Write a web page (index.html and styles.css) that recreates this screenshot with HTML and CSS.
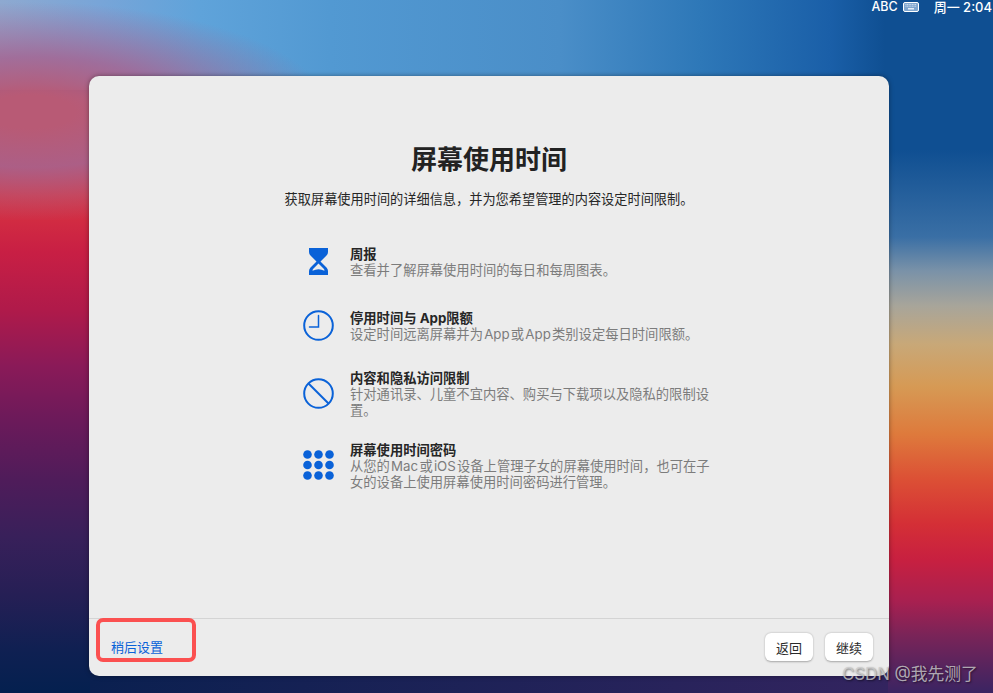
FILE: index.html
```html
<!DOCTYPE html>
<html lang="zh-CN">
<head>
  <meta charset="UTF-8">
  <meta name="viewport" content="width=device-width, initial-scale=1.0">
  <title>屏幕使用时间</title>
  <link rel="stylesheet" href="styles.css">
</head>
<body>
  <div class="menubar">
    <span class="menu-abc">ABC</span>
    <svg class="menu-keyboard" width="16" height="10" viewBox="0 0 16 10">
      <rect x="0.5" y="0.5" width="15" height="9" rx="1.5" fill="#7fa6cf" stroke="#fff"/>
      <rect x="5" y="6" width="6" height="1.5" fill="#e6eef7"/>
      <path d="M2.5 2.5h11M2.5 4.2h11" stroke="#cfdeee" stroke-width="1" stroke-dasharray="1 0.6"/>
    </svg>
    <span class="menu-clock">周一 2:04</span>
  </div>

  <div class="window">
    <div class="content">
      <h1>屏幕使用时间</h1>
      <p class="subtitle">获取屏幕使用时间的详细信息，并为您希望管理的内容设定时间限制。</p>

      <div class="features">
        <div class="feature">
          <div class="feature-icon">
            <svg width="19" height="27" viewBox="0 0 19 27">
              <path d="M0 0H19V4Q19 6 17.500 7.500L11.500 13.500L17.500 19.500Q19 21 19 23V27H0V23Q0 21 1.500 19.500L7.500 13.500L1.500 7.500Q0 6 0 4Z" fill="#0a62d8"/>
              <path d="M9.500 15.500L14.500 20.500Q15.500 21.500 15.500 22.800Q9.500 19.800 3.500 22.800Q3.500 21.500 4.500 20.500Z" fill="#ececec"/>
            </svg>
          </div>
          <div class="feature-text">
            <h3>周报</h3>
            <p>查看并了解屏幕使用时间的每日和每周图表。</p>
          </div>
        </div>

        <div class="feature">
          <div class="feature-icon">
            <svg width="31" height="31" viewBox="0 0 31 31" fill="none" stroke="#0a62d8" stroke-linecap="round">
              <circle cx="15.500" cy="15.500" r="14.300" stroke-width="2"/>
              <path d="M15.500 5.500V17H6.500" stroke-width="1.500"/>
            </svg>
          </div>
          <div class="feature-text">
            <h3>停用时间与 App限额</h3>
            <p>设定时间远离屏幕并为&#8202;App&#8202;或&#8202;App&#8202;类别设定每日时间限额。</p>
          </div>
        </div>

        <div class="feature">
          <div class="feature-icon">
            <svg width="31" height="31" viewBox="0 0 31 31" fill="none" stroke="#0a62d8">
              <circle cx="15.500" cy="15.500" r="14.300" stroke-width="2"/>
              <path d="M5.500 5.500l20 20" stroke-width="2"/>
            </svg>
          </div>
          <div class="feature-text">
            <h3>内容和隐私访问限制</h3>
            <p>针对通讯录、儿童不宜内容、购买与下载项以及隐私的限制设置。</p>
          </div>
        </div>

        <div class="feature">
          <div class="feature-icon">
            <svg width="31" height="30" viewBox="0 0 31 30" fill="#0a62d8">
              <circle cx="4.500" cy="4.500" r="4.300"/><circle cx="15.500" cy="4.500" r="4.300"/><circle cx="26.500" cy="4.500" r="4.300"/>
              <circle cx="4.500" cy="15" r="4.300"/><circle cx="15.500" cy="15" r="4.300"/><circle cx="26.500" cy="15" r="4.300"/>
              <circle cx="4.500" cy="25.500" r="4.300"/><circle cx="15.500" cy="25.500" r="4.300"/><circle cx="26.500" cy="25.500" r="4.300"/>
            </svg>
          </div>
          <div class="feature-text">
            <h3>屏幕使用时间密码</h3>
            <p>从您的&#8202;Mac&#8202;或&#8202;iOS&#8202;设备上管理子女的屏幕使用时间，也可在子女的设备上使用屏幕使用时间密码进行管理。</p>
          </div>
        </div>
      </div>
    </div>

    <div class="footer">
      <a class="later" href="#">稍后设置</a>
      <div class="buttons">
        <button>返回</button>
        <button>继续</button>
      </div>
    </div>
    <div class="highlight"></div>
  </div>

  <div class="watermark">CSDN @我先测了</div>
</body>
</html>
```

FILE: styles.css
```css
body {
  margin: 0;
  width: 993px;
  height: 693px;
  overflow: hidden;
  position: relative;
  font-family: Inter, "Noto Sans CJK SC", sans-serif;
  background-color: #1a2a70;
  background-image:
    radial-gradient(ellipse 300px 110px at 30px 112px, #b85a75 0, #b85a75 15%, rgba(165,100,145,0.85) 50%, rgba(130,130,185,0) 100%),
    linear-gradient(180deg, rgba(184,90,117,0) 85px, #b85a75 100px, #d0484c 138px, #d93540 195px, #c81f44 252px, #b01a4a 309px, #8a1a58 366px, #6a1a5a 423px, #4f1c5a 480px, #38205a 537px, #261f55 594px, #0f2052 651px, #04204f 693px),
    linear-gradient(180deg, #0f4f92 150px, #3a6fa5 237px, #7a92a8 271px, #a8a59a 306px, #c8a878 344px, #d69a55 386px, #de7a3c 434px, #dc5035 479px, #d42f36 524px, #c82040 559px, #a82050 601px, #7a2458 635px, #3a2462 693px),
    linear-gradient(90deg, #8ea9d0 0, #78a5d8 100px, #5fa3da 200px, #5299d2 330px, #4a8ec8 560px, #2e78b8 700px, #1a5fa8 830px, #0f4f92 885px),
    linear-gradient(90deg, #0a2050 89px, #33245f 889px);
  background-size: 100% 220px, 90px 100%, 105px 100%, 100% 90px, 100% 20px;
  background-position: 0 0, left top, right top, 0 0, 0 100%;
  background-repeat: no-repeat;
}

.menubar {
  height: 12px;
  padding: 1px 1px 0 0;
  display: flex;
  justify-content: flex-end;
  align-items: center;
  color: #fff;
  font-size: 13px;
  font-weight: 500;
  line-height: 12px;
}
.menu-abc {
  font-size: 12.5px;
}
.menu-keyboard {
  margin-left: 5px;
}
.menu-clock {
  margin-left: 15px;
}

.window {
  position: relative;
  margin: 63px 0 0 89px;
  width: 800px;
  height: 600px;
  background: #ececec;
  border-radius: 10px;
  box-shadow: 0 0 5px rgba(0,0,0,0.4);
  display: flex;
  flex-direction: column;
}
.content {
  flex: 1;
  padding-top: 67px;
}
h1 {
  margin: 0;
  text-align: center;
  font-size: 26px;
  line-height: 34px;
  font-weight: 700;
  color: #222;
}
.subtitle {
  margin: 13px 0 0;
  text-align: center;
  font-size: 13.2px;
  line-height: 18px;
  color: #262626;
}
.features {
  margin: 38px 0 0 211px;
  width: 412px;
  display: grid;
  grid-template-rows: 64px 60px 72px auto;
}
.feature {
  display: flex;
  align-items: center;
  align-self: start;
}
.feature-icon {
  width: 50px;
  flex: none;
  display: flex;
  justify-content: center;
  margin-top: -2px;
  padding-right: 14px;
  box-sizing: border-box;
}
.feature-text {
  width: 362px;
}
.feature h3 {
  margin: 0;
  font-size: 13.3px;
  line-height: 16px;
  font-weight: 700;
  color: #262626;
}
.feature p {
  margin: 0;
  font-size: 13.3px;
  line-height: 16px;
  color: #7c7c7c;
}

.footer {
  height: 58px;
  box-sizing: border-box;
  border-top: 1px solid #d4d4d4;
  display: flex;
  justify-content: space-between;
  align-items: flex-start;
  padding: 14px 16px 0 22px;
}
.later {
  margin-top: 5px;
  font-size: 13px;
  line-height: 18px;
  color: #0a62d8;
  text-decoration: none;
}
.buttons {
  display: flex;
  gap: 12px;
}
button {
  width: 48px;
  height: 28px;
  padding: 0;
  border: none;
  border-radius: 6px;
  background: #fff;
  color: #2a2a2a;
  font-family: inherit;
  font-size: 13px;
  box-shadow: 0 0.5px 2px rgba(0,0,0,0.3);
}

.highlight {
  position: absolute;
  left: 7px;
  top: 542px;
  width: 100px;
  height: 44px;
  box-sizing: border-box;
  border: 4px solid #fb5050;
  border-radius: 7px;
}
.watermark {
  position: absolute;
  left: 842px;
  top: 663px;
  font-size: 16.8px;
  line-height: 22px;
  color: rgba(205,205,205,0.8);
  text-shadow: 1px 1px 2px rgba(0,0,0,0.5);
  white-space: nowrap;
}
```
